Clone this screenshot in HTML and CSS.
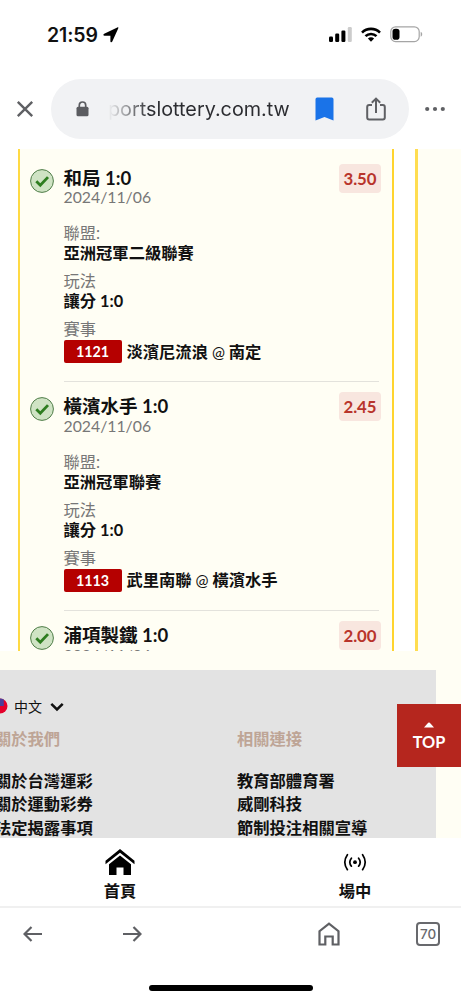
FILE: index.html
```html
<!DOCTYPE html>
<html lang="zh-Hant">
<head>
  <meta charset="UTF-8">
  <meta name="viewport" content="width=device-width, initial-scale=1.0">
  <title>台灣運彩</title>
  <link rel="stylesheet" href="styles.css">
</head>
<body>
  <div class="status-bar">
    <span class="time">21:59</span>
    <svg class="location" width="16" height="16" viewBox="0 0 16 16"><path d="M15.300 1.200 9.300 14.500c-.5 1.100-1.900.9-1.900-.3V8.800H1.500C.2 8.800 0 7.300 1.200 6.800L14.300.5c.8-.4 1.300.1 1 .7z"/></svg>
    <svg class="signal" width="23" height="15" viewBox="0 0 23 15"><rect y="9.500" width="4" height="5.500" rx="1.200"/><rect x="6.200" y="6.500" width="4" height="8.500" rx="1.200"/><rect x="12.400" y="3.500" width="4" height="11.500" rx="1.200"/><rect x="18.800" width="4" height="15" rx="1.200" fill="#ccc"/></svg>
    <svg class="wifi" width="20" height="15" viewBox="0 0 20 15"><g fill="none" stroke="#000" stroke-width="2.600"><path d="M1 5.600a12.800 12.800 0 0 1 18 0"/><path d="M4.500 9.200a7.800 7.800 0 0 1 11 0"/></g><path d="M6.900 11.600a4.400 4.400 0 0 1 6.200 0L10 14.700z"/></svg>
    <svg class="battery" width="33" height="17" viewBox="0 0 33 17"><rect x=".8" y=".8" width="28.400" height="14.800" rx="4.800" fill="none" stroke="#a5a5a5" stroke-width="1.200"/><rect x="2.500" y="2.700" width="7" height="11" rx="2.800"/><path d="M30.700 5.800c2 .8 2 4.200 0 5z" fill="#a5a5a5"/></svg>
  </div>

  <div class="address-bar">
    <svg class="close" width="18" height="18" viewBox="0 0 18 18"><path d="M1.800 1.800l14.400 14.400M16.200 1.800 1.800 16.200"/></svg>
    <div class="url-box">
      <svg class="lock" width="13" height="16" viewBox="0 0 13 16"><path d="M3.300 7V4.200a3.200 3.200 0 0 1 6.400 0V7" fill="none" stroke="#5b5c60" stroke-width="1.700"/><rect x=".5" y="5.800" width="12" height="9.400" rx="1.500" fill="#5b5c60"/></svg>
      <span class="url">portslottery.com.tw</span>
      <svg class="bookmark" width="19" height="24" viewBox="0 0 19 24"><path d="M2.200.5h14.600q1.700 0 1.700 1.700V23.500L9.500 20 .5 23.500V2.200Q.5.500 2.200.5z"/></svg>
      <svg class="share" width="20" height="24" viewBox="0 0 20 24"><path d="M6 8H3.200Q1.200 8 1.200 10v10.500q0 2 2 2h13.600q2 0 2-2V10q0-2-2-2H14M10 16V2M5.800 5.800 10 1.600l4.200 4.200"/></svg>
    </div>
    <svg class="more" width="20" height="6" viewBox="0 0 20 6"><circle cx="2.200" cy="3" r="2.100"/><circle cx="10" cy="3" r="2.100"/><circle cx="17.800" cy="3" r="2.100"/></svg>
  </div>

  <main class="page">
    <div class="ticket-row">
      <div class="ticket">
        <div class="bet">
          <svg class="check" width="24" height="24" viewBox="0 0 24 24"><circle cx="12" cy="12" r="11.400"/><path d="M6.300 12.300l4 4L18 8.100"/></svg>
          <div class="bet-body">
            <div class="bet-head">
              <div class="bet-title">和局 1:0</div>
              <div class="odds">3.50</div>
            </div>
            <div class="date">2024/11/06</div>
            <div class="label league">聯盟:</div>
            <div class="value">亞洲冠軍二級聯賽</div>
            <div class="label">玩法</div>
            <div class="value">讓分 1:0</div>
            <div class="label">賽事</div>
            <div class="match"><span class="code">1121</span><span class="teams">淡濱尼流浪 <span class="at">@</span> 南定</span></div>
          </div>
        </div>
        <div class="bet">
          <svg class="check" width="24" height="24" viewBox="0 0 24 24"><circle cx="12" cy="12" r="11.400"/><path d="M6.300 12.300l4 4L18 8.100"/></svg>
          <div class="bet-body">
            <div class="bet-head">
              <div class="bet-title">橫濱水手 1:0</div>
              <div class="odds">2.45</div>
            </div>
            <div class="date">2024/11/06</div>
            <div class="label league">聯盟:</div>
            <div class="value">亞洲冠軍聯賽</div>
            <div class="label">玩法</div>
            <div class="value">讓分 1:0</div>
            <div class="label">賽事</div>
            <div class="match"><span class="code">1113</span><span class="teams">武里南聯 <span class="at">@</span> 橫濱水手</span></div>
          </div>
        </div>
        <div class="bet">
          <svg class="check" width="24" height="24" viewBox="0 0 24 24"><circle cx="12" cy="12" r="11.400"/><path d="M6.300 12.300l4 4L18 8.100"/></svg>
          <div class="bet-body">
            <div class="bet-head">
              <div class="bet-title">浦項製鐵 1:0</div>
              <div class="odds">2.00</div>
            </div>
            <div class="date">2024/11/06</div>
          </div>
        </div>
      </div>
      <div class="next-ticket"></div>
    </div>

    <footer class="footer">
      <div class="language">
        <svg class="flag" width="16" height="16" viewBox="0 0 16 16"><circle cx="8" cy="8" r="7.500" fill="#e4002b"/><path d="M8 .5V8H11.800V1.500A7.500 7.500 0 0 0 8 .5z" fill="#4b3f9b"/></svg>
        <span>中文</span>
        <svg class="chevron" width="14" height="10" viewBox="0 0 14 10"><path d="M1.300 1.800 7 7.500l5.700-5.700"/></svg>
      </div>
      <div class="columns">
        <div class="column">
          <h3>關於我們</h3>
          <a>關於台灣運彩</a>
          <a>關於運動彩券</a>
          <a>法定揭露事項</a>
        </div>
        <div class="column">
          <h3>相關連接</h3>
          <a>教育部體育署</a>
          <a>威剛科技</a>
          <a>節制投注相關宣導</a>
        </div>
      </div>
    </footer>

    <div class="top-button">
      <svg width="10" height="6" viewBox="0 0 10 6"><path d="M0 5.500 4.200.8q.8-.7 1.600 0L10 5.500z" fill="#fff"/></svg>
      <span>TOP</span>
    </div>
  </main>

  <nav class="tabs">
    <div class="tab">
      <svg width="30" height="27" viewBox="0 0 30 27"><path d="M15 0 29.500 11.800v3.400L15 3.700.5 15.200v-3.400zM15 6.500l11 8.700V26h-7.500v-7.500h-7V26H4V15.200z"/></svg>
      <span>首頁</span>
    </div>
    <div class="tab">
      <svg width="24" height="27" viewBox="0 0 24 27"><circle cx="12" cy="13.200" r="1.900"/><g fill="none" stroke="#000" stroke-width="1.700" stroke-linecap="round"><path d="M8.400 9.200q-3.200 4 0 8M15.600 9.200q3.200 4 0 8M4.400 5.700q-5.200 7.500 0 15M19.600 5.700q5.200 7.500 0 15"/></g></svg>
      <span>場中</span>
    </div>
  </nav>

  <div class="toolbar">
    <div class="toolbar-icons">
      <svg width="20" height="16" viewBox="0 0 20 16"><path d="M19 8H1.500M8.500 1 1.500 8l7 7"/></svg>
      <svg class="forward" width="20" height="16" viewBox="0 0 20 16"><path d="M1 8h17.500M11.500 1l7 7-7 7"/></svg>
      <svg class="home" width="22" height="24" viewBox="0 0 22 24"><path d="M1.500 22.500V9.200L11 1.600l9.500 7.600v13.300h-5.800V14.500H7.300v8z"/></svg>
      <span class="tab-count">70</span>
    </div>
    <div class="home-indicator"></div>
  </div>
</body>
</html>
```
FILE: styles.css
```css
* {
  box-sizing: border-box;
}

body {
  margin: 0;
  width: 461px;
  height: 1000px;
  display: flex;
  flex-direction: column;
  overflow: hidden;
  background-color: #fff;
  font-family: Lato, "Noto Sans CJK TC", sans-serif;
  font-size: 16.3px;
  color: #111;
}

svg {
  display: block;
  flex: none;
}

/* phone status bar */
.status-bar {
  display: flex;
  align-items: center;
  height: 69px;
  flex: none;
  padding: 0 38px 0 47px;
}

.time {
  font-family: Inter, sans-serif;
  font-weight: 600;
  font-size: 19.5px;
  width: 52px;
  letter-spacing: -0.1px;
}

.location {
  margin-left: 4px;
}

.signal {
  margin-left: auto;
}

.wifi {
  margin: 0 9px;
}

/* browser address bar */
.address-bar {
  display: flex;
  align-items: center;
  height: 80px;
  flex: none;
  padding: 0 16px;
}

.close {
  fill: none;
  stroke: #5f6064;
  stroke-width: 2.4;
}

.url-box {
  display: flex;
  align-items: center;
  width: 358px;
  height: 60px;
  margin: 0 16px 0 17px;
  padding-left: 25px;
  border-radius: 30px;
  background-color: #f1f2f4;
}

.url {
  width: 184px;
  margin-left: 19px;
  font-family: Inter, sans-serif;
  font-size: 19.8px;
  white-space: nowrap;
  color: transparent;
  background: linear-gradient(to right, #f1f2f4, #2b2c30 42px);
  -webkit-background-clip: text;
  background-clip: text;
}

.bookmark {
  margin-left: 23px;
  fill: #1a73e8;
}

.share {
  margin-left: 32px;
  fill: none;
  stroke: #5f6064;
  stroke-width: 2;
}

.more {
  fill: #5f6064;
}

/* web page */
.page {
  position: relative;
  flex: none;
  height: 689px;
  background-color: #fffef4;
}

.ticket-row {
  display: flex;
  height: 502px;
  overflow: hidden;
  padding-left: 18px;
  background-color: #fff;
}

.ticket {
  width: 376px;
  flex: none;
  padding: 4.500px 10px 0 10px;
  border-left: 2px solid #ffda44;
  border-right: 2px solid #ffd42e;
  background-color: #fffef4;
}

.next-ticket {
  flex: 1;
  margin-left: 21px;
  border-left: 3px solid #ffdd50;
  background-color: #fffef4;
}

.bet {
  display: flex;
  height: 228.800px;
}

.check {
  margin: 15px 9.500px 0 0;
}

.check circle {
  fill: #cfe3c4;
  stroke: #4f7d48;
  stroke-width: 1;
}

.check path {
  fill: none;
  stroke: #2e7d20;
  stroke-width: 2.8;
}

.bet-body {
  width: 315.500px;
  flex: none;
  padding-top: 13px;
  border-bottom: 1px solid #e3e2dc;
}

.bet-head {
  display: flex;
  justify-content: space-between;
  height: 20.500px;
}

.bet-title {
  font-size: 18.5px;
  line-height: 22px;
  font-weight: bold;
}

.odds {
  width: 42px;
  height: 29px;
  margin: -3px -2px 0 0;
  border-radius: 4px;
  background-color: #f8e6df;
  color: #b8342b;
  font-size: 16.8px;
  font-weight: bold;
  line-height: 29px;
  text-align: center;
}

.date {
  font-size: 15.8px;
  line-height: 19px;
  color: #777;
}

.label {
  margin-top: 8px;
  line-height: 20px;
  color: #777;
}

.league {
  margin-top: 17px;
}

.value {
  line-height: 20px;
  font-weight: bold;
}

.match {
  display: flex;
  align-items: center;
  margin-top: 1px;
  font-weight: bold;
}

.teams {
  line-height: 20px;
}

.at {
  font-weight: normal;
  font-size: 15.5px;
}

.code {
  width: 58px;
  height: 23px;
  margin-right: 5px;
  border-radius: 2px;
  background-color: #b50000;
  color: #fff;
  font-size: 14.3px;
  line-height: 23px;
  text-align: center;
}

.footer {
  width: 436px;
  height: 168px;
  margin-top: 19px;
  overflow: hidden;
  background-color: #e3e3e3;
}

.language {
  display: flex;
  align-items: center;
  height: 20px;
  margin: 26px 0 0 -8px;
  font-size: 14px;
}

.language span {
  margin: 0 8px 0 6px;
}

.chevron {
  margin-top: 2px;
  fill: none;
  stroke: #111;
  stroke-width: 2.5;
}

.columns {
  display: flex;
  margin-left: -5px;
  padding-top: 10.500px;
}

.column {
  width: 242px;
  flex: none;
  font-weight: bold;
}

.column h3 {
  margin: 0 0 18.500px;
  font-size: 16.3px;
  line-height: 23.500px;
  color: #bea596;
}

.column a {
  display: block;
  line-height: 23.500px;
}

.top-button {
  position: absolute;
  right: 0;
  bottom: 71px;
  width: 64px;
  height: 63px;
  padding-top: 18px;
  display: flex;
  flex-direction: column;
  align-items: center;
  background-color: #b5261e;
  color: #fff;
  font-weight: bold;
}

.top-button span {
  margin-top: 4px;
  line-height: 20px;
}

/* site bottom tabs */
.tabs {
  display: flex;
  justify-content: space-between;
  flex: none;
  height: 70px;
  padding: 11px 87px 0 101px;
  border-bottom: 2px solid #f0f0f0;
  font-weight: bold;
}

.tab {
  width: 38px;
  display: flex;
  flex-direction: column;
  align-items: center;
  line-height: 25px;
  white-space: nowrap;
}

.tab span {
  margin-top: 2px;
}

/* browser toolbar */
.toolbar {
  flex: 1;
  display: flex;
  flex-direction: column;
  align-items: center;
}

.toolbar-icons {
  display: flex;
  align-items: center;
  width: 100%;
  height: 52px;
  padding-left: 23px;
}

.toolbar-icons svg {
  fill: none;
  stroke: #5f6064;
  stroke-width: 2.2;
}

.toolbar-icons .forward {
  margin-left: 79px;
}

.toolbar-icons .home {
  margin-left: 176px;
}

.tab-count {
  width: 24px;
  height: 24px;
  margin-left: 76px;
  border: 2px solid #68696d;
  border-radius: 4px;
  color: #68696d;
  font-family: Inter, sans-serif;
  font-size: 13.5px;
  font-weight: 500;
  line-height: 20px;
  text-align: center;
}

.home-indicator {
  width: 164px;
  height: 6px;
  margin-top: 24.500px;
  border-radius: 3px;
  background-color: #000;
}
```
